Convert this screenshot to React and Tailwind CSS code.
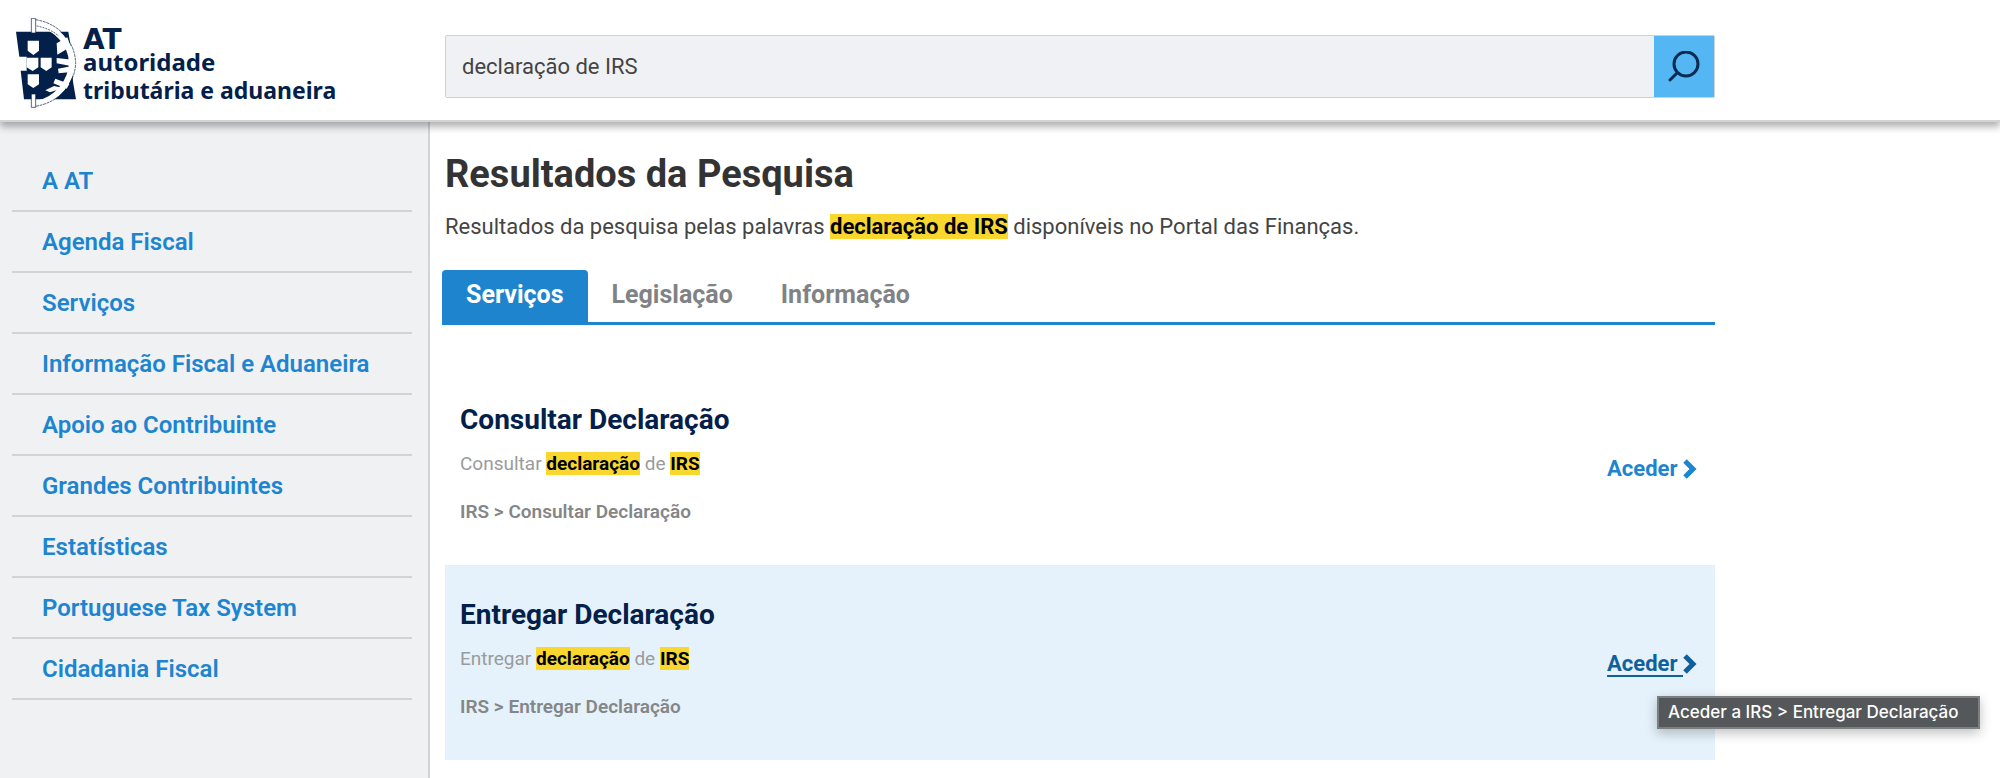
import React from "react";

const menuItems = [
    "A AT",
    "Agenda Fiscal",
    "Serviços",
    "Informação Fiscal e Aduaneira",
    "Apoio ao Contribuinte",
    "Grandes Contribuintes",
    "Estatísticas",
    "Portuguese Tax System",
    "Cidadania Fiscal",
];

const tabs = ["Serviços", "Legislação", "Informação"];

const results = [
    { action: "Consultar", active: false },
    { action: "Entregar", active: true },
];

function Logo() {
    return (
        <a href="#" className="flex items-start w-[445px] shrink-0 pl-4 text-[#03204a]">
            <svg className="w-[61px] h-[90px] shrink-0" viewBox="48 54 183 270" fill="none">
                <path d="M48 95H205L214 150L219 245L228 298H72L62 212H80V170H58Z" fill="#03204a" />
                <path d="M112 69C168 82 214 130 216 188C214 245 172 298 112 311" stroke="#fff" strokeWidth="18" />
                <path d="M107 59C177 70 225 125 227 188C225 252 180 306 107 319" stroke="#03204a" strokeWidth="2" strokeDasharray="9 2" />
                <path d="M110 78C134 82 158 92 176 108" stroke="#03204a" strokeWidth="2" strokeDasharray="6 3" />
                <path d="M170 130L202 112L212 140L172 164ZM170 174L224 180V200L170 190ZM174 206L205 200L214 216L176 220ZM166 236L208 252L200 266L160 250ZM136 271L162 258L190 264L150 277Z" fill="#fff" />
                <g fill="#fff">
                    <path d="M83 122H117V152L100 165L83 152Z" />
                    <path d="M80 173H115V202L98 213L80 202Z" />
                    <path d="M122 173H155V202L139 213L122 202Z" />
                    <path d="M83 223H117V253L100 264L83 253Z" />
                </g>
                <path d="M94 55H107V99H94ZM94 282H107V322H94Z" fill="#fff" stroke="#03204a" strokeWidth="2" />
            </svg>
            <span className="flex flex-col pl-[6px] pt-2 font-['Noto_Sans'] font-bold">
                <span className="font-['DejaVu_Sans'] text-[28px] leading-6 pt-[2px]">AT</span>
                <span className="text-[24px] leading-5">autoridade</span>
                <span className="pt-1 text-[23px] leading-7">tributária e aduaneira</span>
            </span>
        </a>
    );
}

function Header() {
    return (
        <header className="relative z-10 flex items-start h-[122px] bg-white border-b-2 border-[#d0d4d6] shadow-[0_5px_7px_rgba(0,0,0,0.3)]">
            <div className="pt-[18px]">
                <Logo />
            </div>
            <form className="flex flex-1 max-w-[1270px] h-[63px] mt-[35px] border border-[#ccd1d5] rounded-xs" onSubmit={(e) => e.preventDefault()}>
                <input
                    type="text"
                    aria-label="Pesquisar"
                    defaultValue="declaração de IRS"
                    className="flex-1 min-w-0 px-4 bg-[#f0f1f4] text-[22px] text-[#444] outline-none"
                />
                <button type="submit" aria-label="Pesquisar" className="flex items-center justify-center w-[60px] bg-[#54b6f3]">
                    <svg className="w-8 h-8" viewBox="0 0 32 32" fill="none" stroke="#0b2a52" strokeWidth="3" strokeLinecap="round">
                        <circle cx="18" cy="13" r="12" />
                        <path d="M9 22L2 29" />
                    </svg>
                </button>
            </form>
        </header>
    );
}

function Sidebar() {
    return (
        <nav className="w-[430px] shrink-0 bg-[#f0f1f3] border-r-2 border-[#d2d5d8] pl-3 pr-4 pt-[29px]">
            <ul>
                {menuItems.map((item) => (
                    <li key={item} className="h-[61px] border-b-2 border-[#d2d3d5] pl-[30px]">
                        <a href="#" className="block leading-[60px] text-[24px] font-semibold text-[#1d85d0]">{item}</a>
                    </li>
                ))}
            </ul>
        </nav>
    );
}

function Mark({ children }) {
    return <mark className="bg-[#f9d72f] text-black font-bold">{children}</mark>;
}

function Result({ action, active }) {
    const path = `IRS > ${action} Declaração`;
    return (
        <li className={`flex items-center justify-between h-[195px] pl-[15px] pr-[18px] border-y ${active ? "bg-[#e5f2fb] border-[#eeeeee]" : "border-transparent"}`}>
            <div className="pb-2">
                <h2 className="text-[28px] leading-9 font-bold text-[#03204a]">{action} Declaração</h2>
                <p className="mt-3 text-[19px] leading-7 text-[#999b9d]">
                    {action} <Mark>declaração</Mark> de <Mark>IRS</Mark>
                </p>
                <p className="mt-5 text-[19px] leading-7 font-semibold text-[#848688]">{path}</p>
            </div>
            <div className="relative pt-[2px]">
                <a href="#" className={`flex items-center text-[22px] leading-7 font-bold ${active ? "text-[#10619b]" : "text-[#1d85d0]"}`}>
                    <span className={active ? "whitespace-pre underline underline-offset-4" : "whitespace-pre"}>{"Aceder "}</span>
                    <svg className="w-[14px] h-5" viewBox="0 0 14 20" fill="none" stroke="currentColor" strokeWidth="5">
                        <path d="M2 2L10 10L2 18" />
                    </svg>
                </a>
                {active && (
                    <div role="tooltip" className="absolute left-[50px] top-[48px] h-[33px] pl-[9px] pr-5 border-2 border-[#7b7f80] bg-[#54585a] shadow-[0_4px_12px_rgba(0,0,0,0.25)] font-['Inter'] font-medium text-[17px] leading-7 text-white whitespace-nowrap">
                        Aceder a {path}
                    </div>
                )}
            </div>
        </li>
    );
}

export default function App() {
    return (
        <div className="flex flex-col h-screen overflow-hidden bg-white font-['Roboto',sans-serif]">
            <Header />
            <div className="flex flex-1 min-h-0">
                <Sidebar />
                <main className="flex-1 pl-3 pt-7">
                    <div className="max-w-[1273px]">
                        <h1 className="pl-[3px] text-[38px] leading-12 font-bold text-[#333]">Resultados da Pesquisa</h1>
                        <p className="pl-[3px] mt-[13px] text-[22px] leading-8 text-[#444]">
                            Resultados da pesquisa pelas palavras <Mark>declaração de IRS</Mark> disponíveis no Portal das Finanças.
                        </p>
                        <div role="tablist" className="flex mt-[27px] border-b-3 border-[#1f84ce]">
                            {tabs.map((tab, i) => (
                                <button
                                    key={tab}
                                    type="button"
                                    role="tab"
                                    aria-selected={i === 0}
                                    className={`h-[52px] px-6 pb-[2px] text-[25px] font-bold ${i === 0 ? "bg-[#1f84ce] text-white rounded-t" : "text-[#7f8386]"}`}
                                >
                                    {tab}
                                </button>
                            ))}
                        </div>
                        <ul className="ml-[3px] mt-[45px]">
                            {results.map((r) => (
                                <Result key={r.action} {...r} />
                            ))}
                        </ul>
                    </div>
                </main>
            </div>
        </div>
    );
}
